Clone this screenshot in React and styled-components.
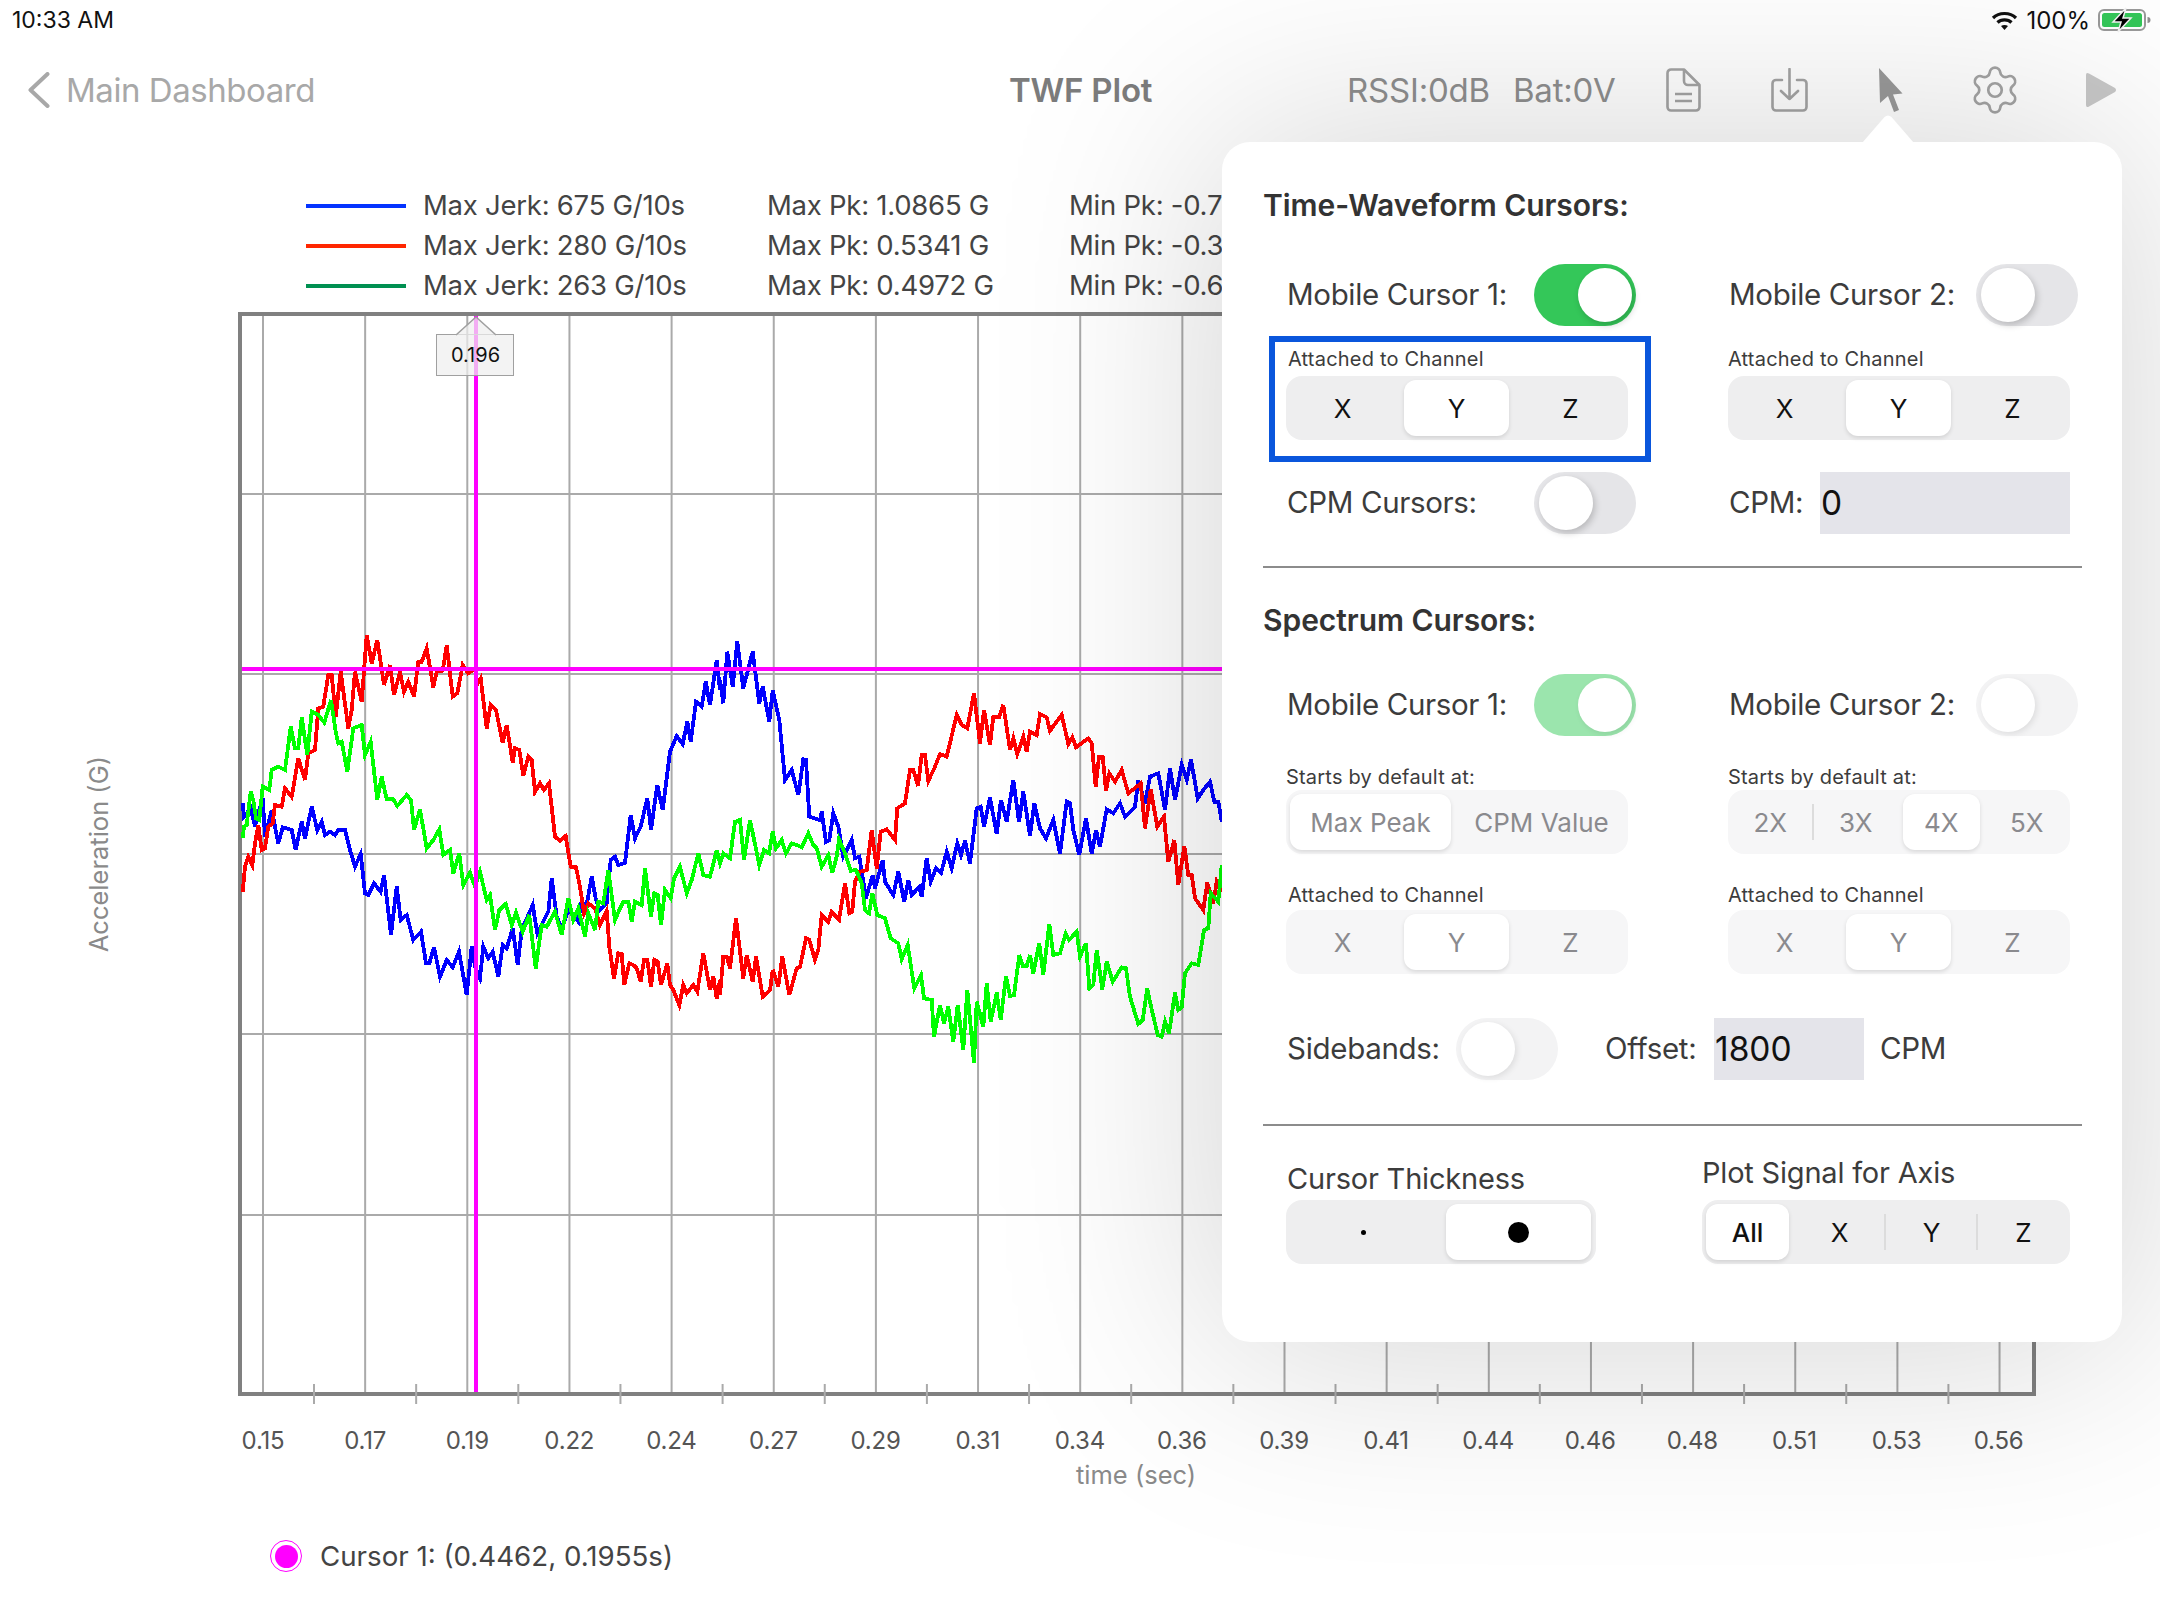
import React from "react";
import styled, { createGlobalStyle } from "styled-components";
import { Settings } from "lucide-react";

const GlobalStyle = createGlobalStyle`
  html, body { margin: 0; padding: 0; background: #fff; }
  * { box-sizing: border-box; }
`;

const Page = styled.div`
  position: relative;
  width: 2160px;
  height: 1620px;
  overflow: hidden;
  background: #fff;
  font-family: Inter, "Liberation Sans", sans-serif;
  color: #444;
`;

const StatusBar = styled.div`
  height: 40px;
  padding: 0 8px 0 12px;
  display: flex;
  align-items: center;
  justify-content: space-between;
  font-size: 23px;
  color: #111;
`;
const StatusRight = styled.div`
  display: flex;
  align-items: center;
  gap: 8px;
  font-size: 24px;
`;

const NavBar = styled.div`
  height: 100px;
  display: flex;
  align-items: center;
  padding-left: 27px;
  position: relative;
`;
const BackLink = styled.div`
  display: flex;
  align-items: center;
  gap: 16px;
  width: 982px;
  font-size: 33px;
  letter-spacing: -0.45px;
  color: #a8a8a8;
`;
const NavTitle = styled.div`
  width: 338px;
  font-size: 33px;
  font-weight: 600;
  letter-spacing: -0.2px;
  color: #7c7c7c;
`;
const NavStat = styled.div`
  font-size: 33px;
  letter-spacing: -0.2px;
  color: #8f8f8f;
  margin-right: ${(p) => p.$gap}px;
`;
const NavIcon = styled.svg`
  display: block;
  flex: none;
  margin-right: ${(p) => p.$gap}px;
  color: #a4a4a4;
`;
const GearWrap = styled.div`
  display: flex;
  margin-right: 62px;
  color: #a4a4a4;
`;

const Legend = styled.div`
  margin: 45px 0 7px 306px;
  display: flex;
  flex-direction: column;
`;
const LegendRow = styled.div`
  height: 40px;
  display: grid;
  grid-template-columns: 117px 344px 302px auto;
  align-items: center;
  font-size: 27.5px;
  letter-spacing: -0.25px;
  color: #444;
`;
const LegendLine = styled.span`
  width: 100px;
  height: 4px;
  margin-top: 2px;
  background: ${(p) => p.$color};
`;

const ChartRow = styled.div`
  display: flex;
`;
const YAxis = styled.div`
  width: 238px;
  padding-right: 42px;
  display: flex;
  align-items: center;
  justify-content: center;
`;
const YAxisLabel = styled.span`
  writing-mode: vertical-rl;
  transform: rotate(180deg);
  font-size: 25.5px;
  color: #8a8a8a;
`;
const Frame = styled.div`
  position: relative;
  width: 1798px;
  height: 1084px;
  border: 4px solid #808080;
`;
const PlotSvg = styled.svg`
  display: block;
  overflow: visible;
`;
const Tip = styled.div`
  position: absolute;
  left: 194px;
  top: 18px;
  width: 78px;
  height: 42px;
  padding-left: 1px;
  background: rgba(238, 238, 238, 0.72);
  border: 1.5px solid #a0a0a0;
  display: flex;
  align-items: center;
  justify-content: center;
  font-size: 20px;
  color: #111;
`;
const TipTail = styled.svg`
  position: absolute;
  left: 17px;
  top: -19px;
`;

const XLabels = styled.div`
  display: flex;
  height: 30px;
  margin-top: 30px;
  padding-left: 212px;
`;
const XLabel = styled.span`
  flex: none;
  width: 102.1px;
  text-align: center;
  font-size: 24px;
  letter-spacing: -0.2px;
  line-height: 30px;
  color: #555;
`;
const XTitle = styled.div`
  margin-top: 2px;
  padding-left: 1076px;
  font-size: 25.5px;
  line-height: 34px;
  color: #8a8a8a;
`;
const CursorReadout = styled.div`
  margin: 47px 0 0 270px;
  display: flex;
  align-items: center;
  gap: 18px;
  font-size: 27.7px;
  color: #444;
`;
const CursorMark = styled.span`
  width: 32px;
  height: 32px;
  border-radius: 50%;
  border: 1.5px solid #ff00ff;
  display: flex;
  align-items: center;
  justify-content: center;
  &::after {
    content: "";
    width: 23px;
    height: 23px;
    border-radius: 50%;
    background: #ff00ff;
  }
`;

const Panel = styled.div`
  position: absolute;
  left: 1222px;
  top: 142px;
  width: 900px;
  height: 1200px;
  padding: 46px 40px 0 41px;
  background: #fff;
  border-radius: 28px;
  box-shadow: 0 0 220px 10px rgba(0, 0, 0, 0.17);
`;
const PanelArrow = styled.svg`
  position: absolute;
  left: 638px;
  top: -27px;
`;
const SectionTitle = styled.div`
  font-size: 30px;
  letter-spacing: -0.05px;
  line-height: 36px;
  font-weight: 600;
  color: #333;
  transform: translateY(-1px);
  margin-top: ${(p) => p.$top || 0}px;
`;
const Columns = styled.div`
  display: grid;
  grid-template-columns: 442px 342px;
  padding-left: 23px;
  margin-top: ${(p) => p.$top || 0}px;
`;
const Field = styled.div`
  display: flex;
  align-items: center;
  height: 62px;
  font-size: 29.5px;
  letter-spacing: -0.35px;
  color: #3c3c3c;
`;
const FieldLabel = styled.span`
  flex: none;
  width: ${(p) => p.$width}px;
  padding: 0 0 2px 1px;
`;
const SwitchTrack = styled.span`
  flex: none;
  position: relative;
  width: 102px;
  height: 62px;
  border-radius: 31px;
  background: ${(p) => (p.$on ? (p.$dim ? "#9be5ad" : "#34c759") : p.$dim ? "#f3f3f4" : "#e5e5e8")};
`;
const SwitchKnob = styled.span`
  position: absolute;
  top: 4px;
  left: ${(p) => (p.$on ? 44 : 5)}px;
  width: 54px;
  height: 54px;
  border-radius: 50%;
  background: #fff;
  box-shadow: ${(p) => (p.$dim ? "2px 2px 6px rgba(0,0,0,.09)" : "2px 3px 7px rgba(0,0,0,.2)")};
`;
const Group = styled.div`
  position: relative;
`;
const SmallLabel = styled.div`
  height: 26px;
  line-height: 26px;
  font-size: 20px;
  letter-spacing: 0.2px;
  color: #3c3c3c;
  padding-left: ${(p) => p.$inset || 0}px;
  margin-bottom: ${(p) => p.$gap || 0}px;
`;
const Segmented = styled.div`
  display: grid;
  grid-template-columns: ${(p) => p.$cols};
  width: ${(p) => p.$width || 342}px;
  height: 64px;
  padding: 4px 0;
  border-radius: 16px;
  background: ${(p) => (p.$dim ? "#f6f6f7" : "#eeeeef")};
  font-size: 26px;
  color: ${(p) => (p.$dim ? "#8a8a8e" : "#111")};
`;
const SegItem = styled.div`
  position: relative;
  display: flex;
  align-items: center;
  justify-content: center;
  margin: 0 5px 0 4px;
  border-radius: 12px;
  font-weight: ${(p) => (p.$strong ? 500 : 400)};
  background: ${(p) => (p.$active ? "#fff" : "transparent")};
  box-shadow: ${(p) => (p.$active ? "0 2px 4px rgba(0,0,0,.12)" : "none")};
  ${(p) =>
    p.$divider &&
    `&::after {
      content: "";
      position: absolute;
      right: -5px;
      top: 10px;
      bottom: 10px;
      width: 2px;
      background: #dcdcdc;
    }`}
`;
const Dot = styled.span`
  width: ${(p) => p.$size}px;
  height: ${(p) => p.$size}px;
  border-radius: 50%;
  background: #000;
`;
const FocusRing = styled.div`
  position: absolute;
  left: -17px;
  top: -10px;
  width: 382px;
  height: 126px;
  border: 6px solid #0a56dc;
  pointer-events: none;
`;
const ValueBox = styled.div`
  flex: none;
  width: ${(p) => p.$width}px;
  height: 62px;
  line-height: 62px;
  padding-left: 1px;
  background: #e4e4ea;
  font-size: 33.5px;
  letter-spacing: 0;
  color: #111;
`;
const Divider = styled.div`
  height: 2px;
  background: #8c8c8c;
  margin-top: ${(p) => p.$top}px;
`;
const SideRow = styled.div`
  display: flex;
  align-items: center;
  height: 62px;
  margin: 44px 0 0 23px;
  font-size: 29.5px;
  letter-spacing: -0.3px;
  color: #3c3c3c;
`;
const Spaced = styled.span`
  flex: none;
  width: ${(p) => p.$width}px;
  margin-left: ${(p) => p.$left || 0}px;
  padding-bottom: 2px;
`;
const BottomRow = styled.div`
  display: grid;
  grid-template-columns: 416px 368px;
  padding-left: 23px;
  margin-top: 29px;
  align-items: end;
`;
const BottomLabel = styled.div`
  font-size: 29px;
  letter-spacing: -0.2px;
  line-height: 36px;
  color: #3c3c3c;
  padding-left: ${(p) => p.$inset || 0}px;
  margin-bottom: ${(p) => p.$gap}px;
`;

/* traced from the plot: pairs in 3x crop pixels, two crops */
const toPoints = (a, b) => {
  const map = (s, ox) =>
    s
      .trim()
      .split(/\s+/)
      .map((p) => {
        const [x, y] = p.split(",").map(Number);
        return `${(ox + x / 3).toFixed(1)},${(600 + y / 3).toFixed(1)}`;
      });
  return [...map(a, 220), ...map(b, 720)].join(" ");
};

const BLUE = toPoints(
  `68,610 72,650 92,625 105,680 115,640 128,595 135,710 155,630 175,730 188,682 215,690 227,750 245,665 255,715 275,620 292,690 305,665 315,705 330,695 345,705 355,690 375,690 390,750 405,800 422,762 435,880 445,885 462,850 482,875 492,825 513,1005 530,860 542,960 560,945 580,1020 603,995 618,1090 628,1090 642,1042 660,1130 680,1080 698,1102 717,1055 740,1185 755,1040 765,1100 780,1135 790,1040 805,1075 818,1055 835,1130 848,1035 860,1045 878,985 893,1095 905,990 938,915 952,1000 985,935 995,835 1010,950 1025,985 1045,930 1055,940 1075,965 1085,900 1097,930 1115,830 1128,900 1140,930 1160,910 1172,780 1185,770 1195,795 1215,788 1232,645 1245,715 1262,680 1282,595 1293,690 1312,555 1328,630 1350,455 1370,408 1388,432 1402,365 1412,425 1428,305 1445,320 1457,245 1470,315 1490,180 1500,270`,
  `0,240 10,310 22,155 38,260 52,125 70,265 98,155 118,310 128,260 148,365 158,270 178,360 195,540 215,510 235,585 250,478 258,480 268,650 300,660 305,635 318,725 328,720 340,640 355,680 370,770 395,720 405,775 418,770 438,895 458,825 465,865 488,780 495,845 520,885 535,815 553,905 565,840 575,885 598,860 605,890 620,775 632,845 648,805 663,820 680,755 695,805 712,730 723,765 735,722 750,790 770,625 782,620 792,680 810,593 830,702 843,600 860,665 880,540 897,665 910,575 930,708 943,610 960,685 978,715 1000,660 1020,760 1040,605 1050,610 1060,690 1078,765 1098,655 1115,762 1128,690 1140,740 1160,628 1180,640 1200,610 1215,650 1245,620 1255,540 1275,610 1290,530 1315,520 1335,630 1350,505 1365,600 1385,495 1400,540 1413,478 1433,595 1450,570 1470,545 1483,605 1495,605 1505,665`
);
const RED = toPoints(
  `68,875 75,800 85,770 97,795 105,730 115,675 125,750 135,745 145,680 158,670 165,615 185,620 195,565 215,590 235,475 255,540 265,460 285,450 295,325 310,320 325,225 335,225 347,350 362,215 385,385 395,330 405,215 425,305 440,105 455,190 472,120 492,255 510,195 522,285 540,215 552,275 565,245 582,290 595,185 605,185 620,145 640,262 650,215 668,212 680,135 698,290 712,280 728,195 745,220 765,205 770,255 782,235 800,385 812,315 828,330 848,428 860,375 878,488 885,445 898,450 910,528 925,470 935,480 945,575 960,550 972,570 987,550 1005,710 1020,722 1037,708 1052,800 1068,802 1080,860 1092,940 1105,910 1125,925 1140,975 1160,932 1168,1040 1182,1135 1195,1060 1205,1062 1213,1155 1228,1090 1240,1095 1250,1105 1262,1145 1272,1080 1282,1080 1293,1160 1303,1080 1313,1085 1323,1155 1342,1090 1350,1155 1360,1170 1378,1215 1390,1155 1400,1180 1420,1155 1432,1175 1450,1060 1470,1170 1480,1130 1490,1195 1500,1140`,
  `0,1185 10,1070 20,1070 30,1105 48,955 70,1135 80,1065 98,1145 108,1070 128,1190 150,1170 158,1110 175,1160 187,1070 208,1185 230,1105 240,1100 258,1015 268,1020 285,1080 295,1050 305,945 325,965 335,935 357,960 375,850 388,940 397,935 405,845 420,815 440,810 455,690 470,805 482,695 500,688 525,720 532,625 555,610 570,510 580,510 594,558 605,465 615,465 625,543 645,500 660,462 680,470 710,345 725,375 742,385 762,280 780,430 792,330 810,435 820,350 838,350 850,315 870,450 880,415 892,462 910,410 920,455 930,395 950,405 960,342 980,352 990,392 1025,345 1045,432 1057,412 1068,442 1105,415 1115,430 1127,560 1137,470 1148,470 1158,572 1168,520 1185,545 1205,510 1225,580 1250,560 1262,550 1275,685 1292,568 1312,680 1332,650 1345,785 1363,720 1375,855 1393,738 1405,825 1415,825 1425,895 1450,930 1462,848 1480,910 1490,845 1505,875`
);
const GREEN = toPoints(
  `68,715 72,680 80,675 92,575 100,600 108,655 118,660 128,560 148,570 155,510 175,500 195,510 212,380 225,445 235,445 245,352 262,465 275,335 295,345 313,368 333,300 347,395 355,430 365,425 382,515 400,385 425,375 435,465 452,425 472,600 485,530 500,598 520,598 532,618 560,585 573,600 582,690 600,628 620,745 640,720 658,688 670,765 690,750 700,820 718,760 730,855 750,818 765,860 780,815 800,900 810,885 825,990 838,930 857,912 875,975 888,938 908,995 928,945 947,1105 965,975 980,980 1005,935 1025,1005 1045,895 1060,960 1075,925 1095,1010 1105,940 1125,990 1135,905 1150,910 1165,810 1185,960 1200,925 1210,905 1225,905 1235,965 1245,905 1265,915 1275,805 1293,950 1303,880 1313,885 1323,975 1335,870 1352,895 1362,835 1380,800 1400,880 1415,840 1435,760 1450,825 1470,830 1490,750 1500,790`,
  `0,790 10,760 30,775 45,665 60,660 72,780 90,660 118,795 132,750 147,760 158,695 168,745 185,720 198,760 215,730 230,735 245,742 265,700 280,735 290,745 305,800 325,765 337,818 350,770 357,718 375,760 392,812 408,810 425,850 435,930 447,940 457,880 472,945 495,955 512,1015 535,1030 545,1078 563,1035 583,1165 603,1125 612,1195 635,1200 642,1310 660,1215 672,1270 685,1220 700,1325 713,1215 730,1350 742,1170 762,1390 770,1205 790,1280 800,1150 812,1265 830,1178 842,1260 858,1130 870,1188 882,1185 898,1065 908,1098 920,1098 930,1065 940,1120 958,1030 970,1125 988,972 1000,1065 1020,1060 1037,1000 1047,1020 1070,995 1080,1070 1098,1030 1108,1165 1120,1155 1130,1050 1147,1168 1160,1085 1178,1145 1205,1102 1218,1105 1230,1190 1255,1272 1268,1260 1282,1165 1292,1215 1313,1305 1325,1310 1335,1265 1347,1300 1365,1178 1375,1230 1385,1222 1395,1120 1415,1090 1435,1095 1452,990 1465,985 1472,880 1495,905 1505,795`
);

const X_LABELS = ["0.15","0.17","0.19","0.22","0.24","0.27","0.29","0.31","0.34","0.36","0.39","0.41","0.44","0.46","0.48","0.51","0.53","0.56"];
const LEGEND = [
  ["#0433ff", "Max Jerk: 675 G/10s", "Max Pk: 1.0865 G", "Min Pk: -0.7"],
  ["#ff2600", "Max Jerk: 280 G/10s", "Max Pk: 0.5341 G", "Min Pk: -0.3"],
  ["#009051", "Max Jerk: 263 G/10s", "Max Pk: 0.4972 G", "Min Pk: -0.6"],
];
const XYZ = "1fr 1fr 1fr";

const Switch = ({ on, dim }) => (
  <SwitchTrack $on={on} $dim={dim}>
    <SwitchKnob $on={on} $dim={dim} />
  </SwitchTrack>
);

const Channel = ({ dim }) => (
  <Segmented $cols={XYZ} $dim={dim}>
    <SegItem>X</SegItem>
    <SegItem $active>Y</SegItem>
    <SegItem>Z</SegItem>
  </Segmented>
);

const Plot = () => (
  <PlotSvg width="1790" height="1076" viewBox="242 316 1790 1076">
    <g stroke="#aaa" strokeWidth="2">
      {X_LABELS.map((_, i) => {
        const x = 263 + i * 102.15;
        return <line key={i} x1={x} x2={x} y1="316" y2="1392" />;
      })}
      {[494, 674, 854, 1034, 1215].map((y) => (
        <line key={y} x1="242" x2="2032" y1={y} y2={y} />
      ))}
      {Array.from({ length: 17 }, (_, i) => {
        const x = 314 + i * 102.15;
        return <line key={i} x1={x} x2={x} y1="1384" y2="1404" />;
      })}
    </g>
    <g fill="none" strokeWidth="3.8" shapeRendering="crispEdges" strokeLinejoin="miter">
      <polyline points={BLUE} stroke="#0000ff" />
      <polyline points={RED} stroke="#ff0000" />
      <polyline points={GREEN} stroke="#00ff00" />
    </g>
    <g stroke="#ff00ff" strokeWidth="4">
      <line x1="242" x2="1222" y1="669" y2="669" />
      <line x1="476" x2="476" y1="316" y2="1392" />
    </g>
  </PlotSvg>
);

export default function App() {
  return (
    <Page>
      <GlobalStyle />
      <StatusBar>
        <span>10:33 AM</span>
        <StatusRight>
          <svg width="27" height="21" viewBox="0 0 27 21">
            <g fill="none" stroke="#111" strokeWidth="3.2">
              <path d="M2 8 C8 2 19 2 25 8" />
              <path d="M6.5 12.5 C10 9 17 9 20.5 12.5" />
            </g>
            <path d="M10 16 C12 14.5 15 14.5 17 16 L13.5 20 Z" fill="#111" />
          </svg>
          <span>100%</span>
          <svg width="54" height="26" viewBox="0 0 54 26">
            <rect x="1" y="3" width="46" height="20" rx="5" fill="none" stroke="#9a9a9a" strokeWidth="2" />
            <rect x="4" y="6" width="40" height="14" rx="2.5" fill="#34c759" />
            <path d="M49.500 10 a3 3 0 0 1 0 6 Z" fill="#8f8f8f" />
            <path d="M28 1 L15 15 H23 L20 25 L33 11 H25 Z" fill="#000" stroke="#f2f2f2" strokeWidth="1.5" />
          </svg>
        </StatusRight>
      </StatusBar>

      <NavBar>
        <BackLink>
          <svg width="23" height="36" viewBox="0 0 23 36">
            <path d="M20.500 2 L3.500 18 L20.500 34" fill="none" stroke="#a8a8a8" strokeWidth="4" strokeLinecap="round" strokeLinejoin="round" />
          </svg>
          Main Dashboard
        </BackLink>
        <NavTitle>TWF Plot</NavTitle>
        <NavStat $gap={23}>RSSI:0dB</NavStat>
        <NavStat $gap={51}>Bat:0V</NavStat>
        <NavIcon $gap={70} width="35" height="44" viewBox="0 0 35 44" fill="none" stroke="currentColor" strokeWidth="2.6" strokeLinejoin="round">
          <path d="M5 1.500 H18 L33.500 17 V39 a3.500 3.500 0 0 1 -3.500 3.500 H5 a3.500 3.500 0 0 1 -3.500 -3.500 V5 a3.500 3.500 0 0 1 3.500 -3.500 Z" />
          <path d="M18 1.500 V13 a4 4 0 0 0 4 4 H33.500" />
          <path d="M9 26 H26 M9 33 H26" />
        </NavIcon>
        <NavIcon $gap={70} width="37" height="44" viewBox="0 0 37 44" fill="none" stroke="currentColor" strokeWidth="2.6" strokeLinecap="round" strokeLinejoin="round">
          <path d="M11 12 H5 a3.500 3.500 0 0 0 -3.500 3.500 V39 a3.500 3.500 0 0 0 3.500 3.500 H32 a3.500 3.500 0 0 0 3.500 -3.500 V15.500 a3.500 3.500 0 0 0 -3.500 -3.500 H26" />
          <path d="M18.500 1 V31 M10 23 L18.500 31 L27 23" />
        </NavIcon>
        <NavIcon $gap={64} width="26" height="44" viewBox="0 0 26 44">
          <path d="M1 0 L24.500 25.500 L15 26.500 L21 42 L16 44 L10 28 L2 35 Z" fill="#9a9a9a" />
        </NavIcon>
        <GearWrap>
          <Settings size={54} strokeWidth={1.2} />
        </GearWrap>
        <NavIcon $gap={0} width="33" height="36" viewBox="0 0 33 36">
          <path d="M2 3 Q2 0 5 1.500 L31 16 Q33 18 31 20 L5 34.500 Q2 36 2 33 Z" fill="#c8c8c8" />
        </NavIcon>
      </NavBar>

      <Legend>
        {LEGEND.map(([color, a, b, c]) => (
          <LegendRow key={a}>
            <LegendLine $color={color} />
            <span>{a}</span>
            <span>{b}</span>
            <span>{c}</span>
          </LegendRow>
        ))}
      </Legend>

      <ChartRow>
        <YAxis>
          <YAxisLabel>Acceleration (G)</YAxisLabel>
        </YAxis>
        <Frame>
          <Plot />
          <Tip>
            <TipTail width="44" height="20" viewBox="0 0 44 20">
              <path d="M2 19 L22 1 L42 19" fill="rgba(238,238,238,.72)" stroke="#a0a0a0" strokeWidth="1.5" />
            </TipTail>
            0.196
          </Tip>
        </Frame>
      </ChartRow>

      <XLabels>
        {X_LABELS.map((l) => (
          <XLabel key={l}>{l}</XLabel>
        ))}
      </XLabels>
      <XTitle>time (sec)</XTitle>
      <CursorReadout>
        <CursorMark />
        Cursor 1: (0.4462, 0.1955s)
      </CursorReadout>

      <Panel>
        <PanelArrow width="56" height="28" viewBox="0 0 56 28">
          <path d="M2 28 L24.500 2 Q28 -1 31.500 2 L54 28 Z" fill="#fff" />
        </PanelArrow>

        <SectionTitle>Time-Waveform Cursors:</SectionTitle>
        <Columns $top={40}>
          <Field>
            <FieldLabel $width={248}>Mobile Cursor 1:</FieldLabel>
            <Switch on />
          </Field>
          <Field>
            <FieldLabel $width={248}>Mobile Cursor 2:</FieldLabel>
            <Switch />
          </Field>
        </Columns>
        <Columns $top={20}>
          <Group>
            <SmallLabel $inset={2} $gap={4}>Attached to Channel</SmallLabel>
            <Channel />
            <FocusRing />
          </Group>
          <Group>
            <SmallLabel $inset={0} $gap={4}>Attached to Channel</SmallLabel>
            <Channel />
          </Group>
        </Columns>
        <Columns $top={32}>
          <Field>
            <FieldLabel $width={248}>CPM Cursors:</FieldLabel>
            <Switch />
          </Field>
          <Field>
            <FieldLabel $width={92}>CPM:</FieldLabel>
            <ValueBox $width={250}>0</ValueBox>
          </Field>
        </Columns>
        <Divider $top={32} />

        <SectionTitle $top={35}>Spectrum Cursors:</SectionTitle>
        <Columns $top={35}>
          <Field>
            <FieldLabel $width={248}>Mobile Cursor 1:</FieldLabel>
            <Switch on dim />
          </Field>
          <Field>
            <FieldLabel $width={248}>Mobile Cursor 2:</FieldLabel>
            <Switch dim />
          </Field>
        </Columns>
        <Columns $top={28}>
          <Group>
            <SmallLabel>Starts by default at:</SmallLabel>
            <Segmented $cols="170px 1fr" $dim>
              <SegItem $active>Max Peak</SegItem>
              <SegItem>CPM Value</SegItem>
            </Segmented>
          </Group>
          <Group>
            <SmallLabel>Starts by default at:</SmallLabel>
            <Segmented $cols="1fr 1fr 1fr 1fr" $dim>
              <SegItem $divider>2X</SegItem>
              <SegItem>3X</SegItem>
              <SegItem $active>4X</SegItem>
              <SegItem>5X</SegItem>
            </Segmented>
          </Group>
        </Columns>
        <Columns $top={28}>
          <Group>
            <SmallLabel $inset={2} $gap={2}>Attached to Channel</SmallLabel>
            <Channel dim />
          </Group>
          <Group>
            <SmallLabel $inset={0} $gap={2}>Attached to Channel</SmallLabel>
            <Channel dim />
          </Group>
        </Columns>

        <SideRow>
          <FieldLabel $width={170}>Sidebands:</FieldLabel>
          <Switch dim />
          <Spaced $width={109} $left={47}>Offset:</Spaced>
          <ValueBox $width={150}>1800</ValueBox>
          <Spaced $left={16}>CPM</Spaced>
        </SideRow>
        <Divider $top={44} />

        <BottomRow>
          <div>
            <BottomLabel $inset={1} $gap={3}>Cursor Thickness</BottomLabel>
            <Segmented $cols="156px 154px" $width={310}>
              <SegItem><Dot $size={5} /></SegItem>
              <SegItem $active><Dot $size={21} /></SegItem>
            </Segmented>
          </div>
          <div>
            <BottomLabel $inset={0} $gap={9}>Plot Signal for Axis</BottomLabel>
            <Segmented $cols="1fr 1fr 1fr 1fr" $width={368}>
              <SegItem $active $strong>All</SegItem>
              <SegItem $divider>X</SegItem>
              <SegItem $divider>Y</SegItem>
              <SegItem>Z</SegItem>
            </Segmented>
          </div>
        </BottomRow>
      </Panel>
    </Page>
  );
}
